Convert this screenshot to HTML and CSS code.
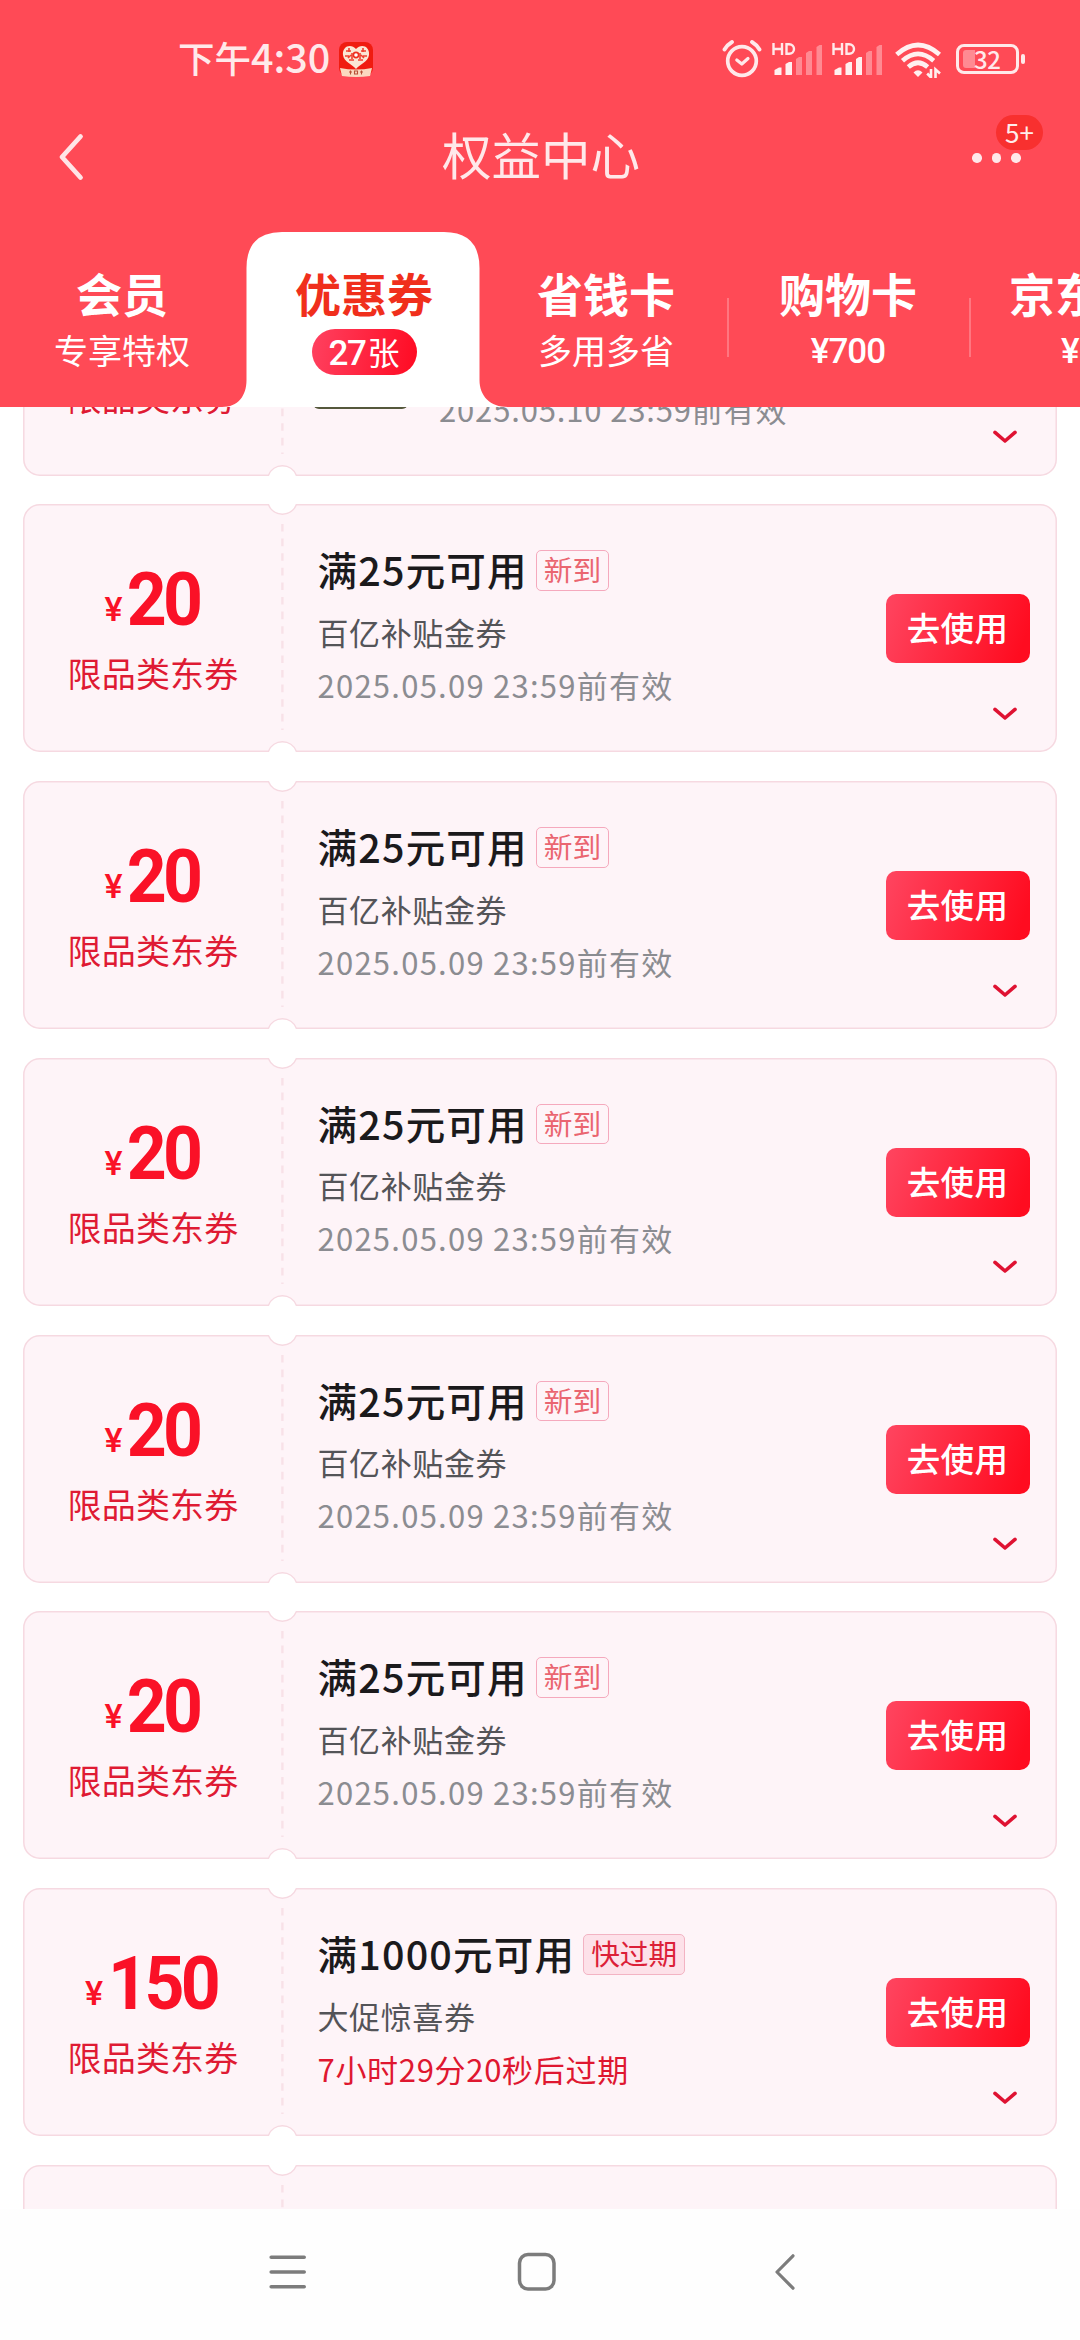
FILE: index.html
```html
<!DOCTYPE html>
<html lang="zh-CN">
<head>
<meta charset="utf-8">
<title>权益中心</title>
<link rel="stylesheet" href="styles.css">
</head>
<body>
<svg class="defs" width="0" height="0">
  <symbol id="ticket" viewBox="0 0 1034 248">
    <path d="M16.8 .8H245.5a15 15 0 0 0 27.8 0H1017.2a16 16 0 0 1 16 16V231.2a16 16 0 0 1 -16 16H273.3a15 15 0 0 0 -27.8 0H16.8a16 16 0 0 1 -16 -16V16.8a16 16 0 0 1 16 -16Z" fill="#fef4f8" stroke="#f6d9e1" stroke-width="1.5"/>
    <path d="M259.4 20V226" stroke="#f8e1e8" stroke-width="2.4" stroke-dasharray="7.6 7" fill="none"/>
  </symbol>
  <symbol id="chev" viewBox="0 0 24 14">
    <path d="M2 2.4L12 11L22 2.4" fill="none" stroke="#df1232" stroke-width="3.6" stroke-linecap="round" stroke-linejoin="round"/>
  </symbol>
  <symbol id="signal-hd" viewBox="0 0 24 12">
    <path d="M1.5 0V12M10 0V12M1.5 6H10M14.5 1.2H17.2a4.8 4.8 0 0 1 0 9.6H14.5Z" fill="none" stroke="#ffe9ea" stroke-width="2.4"/>
  </symbol>
</svg>
<div class="screen">
  <header class="header">
    <div class="status">
      <div class="clock">下午<span class="digits">4:30</span></div>
      <svg class="app" width="34" height="35" viewBox="0 0 34 35">
        <rect x="0" y="0" width="34" height="34" rx="8" fill="#f01c10"/>
        <path d="M17 7C12 1 3 4 4 13C5 20 13 22 17 27C21 22 29 20 30 13C31 4 22 1 17 7Z" fill="#fbe6d4"/>
        <path d="M7 9h5M6 14h4M10 6v4M13 11v6M21 11v6M24 6v4M22 9h5M24 14h4M10 18h5M19 18h5M12 13l-3 3M22 13l3 3" stroke="#ef4030" stroke-width="1.6" fill="none"/>
        <circle cx="17" cy="13" r="2.6" fill="#fff" stroke="#ef3020" stroke-width="1.6"/>
        <path d="M1 26Q17 29 33 26L31 34Q17 36 3 34Z" fill="#fbd9c0"/>
        <path d="M10 30h3M11.500 28.500v4M15.500 29h3v3h-3zM21 30h3M22.500 28.500v4" stroke="#b85038" stroke-width="1.1" fill="none"/>
      </svg>
      <div class="status-icons">
        <svg class="alarm" width="40" height="40" viewBox="0 0 40 40" fill="none" stroke="#ffe9ea" stroke-linecap="round" stroke-linejoin="round">
          <circle cx="20" cy="23" r="14.300" stroke-width="3.700"/>
          <path d="M2.500 11.500Q5 7 10 4M37.500 11.500Q35 7 30 4" stroke-width="3.800"/>
          <path d="M14.800 22L19.800 26L26 20.500" stroke-width="3.200"/>
        </svg>
        <svg class="signal" width="50" height="34" viewBox="0 0 50 34">
          <use href="#signal-hd" x="0" y="1" width="24" height="12"/>
          <g fill="#fff0f0"><path d="M2.500 33V28L7 25.500H9.500V33ZM13.500 33V22L17 20H20V33Z"/></g>
          <g fill="#ff8a92"><path d="M24 33V17L27 15H30V33ZM34 33V11L37 9H40V33ZM44.500 33V5L47.500 3H50V33Z"/></g>
        </svg>
        <svg class="signal" width="50" height="34" viewBox="0 0 50 34">
          <use href="#signal-hd" x="0" y="1" width="24" height="12"/>
          <g fill="#fff0f0"><path d="M2.500 33V28L7 25.500H9.500V33ZM13.500 33V22L17 20H20V33ZM24 33V17L27 15H30V33Z"/></g>
          <g fill="#ff8a92"><path d="M34 33V11L37 9H40V33ZM44.500 33V5L47.500 3H50V33Z"/></g>
        </svg>
        <svg class="wifi" width="47" height="36" viewBox="0 0 47 36" fill="none" stroke="#fff0f0" stroke-width="4.600">
          <path d="M1.700 12.500Q23 -6.500 44.500 12.500M7.500 18.800Q23 5 38.700 18.800M13.300 25Q23 16.500 32.700 25"/>
          <path d="M23 35L18.500 30.500Q23 26 27.500 30.500Z" fill="#fff0f0" stroke="none"/>
          <path d="M36 27V35.500L32.200 31.500M40.500 36V27.500L45 31.500" stroke-width="2.600"/>
        </svg>
        <div class="battery"><div class="battery-body"><i class="battery-fill"></i><span>32</span></div><i class="battery-tip"></i></div>
      </div>
    </div>
    <div class="titlebar">
      <svg class="back" width="26" height="50" viewBox="0 0 26 50"><path d="M22.500 4.500L4 25L22.500 45.500" fill="none" stroke="#ffe4e6" stroke-width="4.800" stroke-linecap="round" stroke-linejoin="round"/></svg>
      <h1 class="title">权益中心</h1>
      <div class="more"><i></i><i></i><i></i><b class="badge">5+</b></div>
    </div>
    <nav class="tabs">
      <div class="tab"><strong>会员</strong><span>专享特权</span></div>
      <div class="tab active">
        <svg class="tab-shape" width="286" height="175" viewBox="0 0 286 175"><path d="M0 175C16 175 24.500 164 24.500 148V36Q24.500 0 60 0H222Q257.500 0 257.500 36V148C257.500 164 268 175 286 175Z" fill="#fff"/></svg>
        <strong>优惠券</strong><span class="pill"><em>27</em>张</span>
      </div>
      <div class="tab"><strong>省钱卡</strong><span>多用多省</span></div>
      <div class="tab ruled"><strong>购物卡</strong><span class="money">¥700</span></div>
      <div class="tab ruled cut"><strong>京东</strong><span class="money">¥</span></div>
    </nav>
  </header>

  <main class="list">
    <article class="coupon">
      <svg class="paper"><use href="#ticket"/></svg>
      <div class="value"><div class="scope">限品类东券</div></div>
      <div class="with-thumb"><div class="thumb"></div><p class="date">2025.05.10 23:59前有效</p></div>
      <div class="action"><svg class="chev"><use href="#chev"/></svg></div>
    </article>
    <article class="coupon">
      <svg class="paper"><use href="#ticket"/></svg>
      <div class="value"><div class="price"><i>¥</i><b>20</b></div><div class="scope">限品类东券</div></div>
      <div class="info"><div class="head"><h2>满25元可用</h2><span class="tag">新到</span></div><p class="name">百亿补贴金券</p><p class="date">2025.05.09 23:59前有效</p></div>
      <div class="action"><button class="use">去使用</button><svg class="chev"><use href="#chev"/></svg></div>
    </article>
    <article class="coupon">
      <svg class="paper"><use href="#ticket"/></svg>
      <div class="value"><div class="price"><i>¥</i><b>20</b></div><div class="scope">限品类东券</div></div>
      <div class="info"><div class="head"><h2>满25元可用</h2><span class="tag">新到</span></div><p class="name">百亿补贴金券</p><p class="date">2025.05.09 23:59前有效</p></div>
      <div class="action"><button class="use">去使用</button><svg class="chev"><use href="#chev"/></svg></div>
    </article>
    <article class="coupon">
      <svg class="paper"><use href="#ticket"/></svg>
      <div class="value"><div class="price"><i>¥</i><b>20</b></div><div class="scope">限品类东券</div></div>
      <div class="info"><div class="head"><h2>满25元可用</h2><span class="tag">新到</span></div><p class="name">百亿补贴金券</p><p class="date">2025.05.09 23:59前有效</p></div>
      <div class="action"><button class="use">去使用</button><svg class="chev"><use href="#chev"/></svg></div>
    </article>
    <article class="coupon">
      <svg class="paper"><use href="#ticket"/></svg>
      <div class="value"><div class="price"><i>¥</i><b>20</b></div><div class="scope">限品类东券</div></div>
      <div class="info"><div class="head"><h2>满25元可用</h2><span class="tag">新到</span></div><p class="name">百亿补贴金券</p><p class="date">2025.05.09 23:59前有效</p></div>
      <div class="action"><button class="use">去使用</button><svg class="chev"><use href="#chev"/></svg></div>
    </article>
    <article class="coupon">
      <svg class="paper"><use href="#ticket"/></svg>
      <div class="value"><div class="price"><i>¥</i><b>20</b></div><div class="scope">限品类东券</div></div>
      <div class="info"><div class="head"><h2>满25元可用</h2><span class="tag">新到</span></div><p class="name">百亿补贴金券</p><p class="date">2025.05.09 23:59前有效</p></div>
      <div class="action"><button class="use">去使用</button><svg class="chev"><use href="#chev"/></svg></div>
    </article>
    <article class="coupon">
      <svg class="paper"><use href="#ticket"/></svg>
      <div class="value"><div class="price"><i>¥</i><b>150</b></div><div class="scope">限品类东券</div></div>
      <div class="info"><div class="head"><h2>满1000元可用</h2><span class="tag urgent">快过期</span></div><p class="name">大促惊喜券</p><p class="date countdown">7小时29分20秒后过期</p></div>
      <div class="action"><button class="use">去使用</button><svg class="chev"><use href="#chev"/></svg></div>
    </article>
    <article class="coupon"><svg class="paper"><use href="#ticket"/></svg></article>
  </main>

  <footer class="sysnav">
    <svg width="38" height="40" viewBox="0 0 38 40"><path d="M3.200 5.200H36.200M3.200 20H36.200M3.200 34.800H36.200" stroke="#7c7c7c" stroke-width="3.600" stroke-linecap="round"/></svg>
    <svg class="home" width="40" height="40" viewBox="0 0 40 40"><rect x="2.500" y="2.500" width="34.500" height="34.500" rx="8.500" fill="none" stroke="#7c7c7c" stroke-width="3.500"/></svg>
    <svg width="22" height="40" viewBox="0 0 22 40"><path d="M19 3.800L3 20L19 36.200" fill="none" stroke="#7c7c7c" stroke-width="3.200" stroke-linecap="round" stroke-linejoin="round"/></svg>
  </footer>
</div>
</body>
</html>
```
FILE: styles.css
```css
* { box-sizing: border-box; margin: 0; padding: 0; }
body { width: 1080px; height: 2340px; overflow: hidden; background: #fff; font-family: "Noto Sans CJK SC", sans-serif; }
i, em { font-style: normal; }
svg { display: block; flex: none; }
.defs { position: absolute; }
.screen { width: 1080px; height: 2340px; display: flex; flex-direction: column; overflow: hidden; }

/* header */
.header { height: 407px; flex: none; background: #ff4a56; color: #fff; display: flex; flex-direction: column; overflow: hidden; }
.status { height: 112px; padding: 38px 55px 0 178px; display: flex; align-items: flex-start; color: #ffe9ea; }
.clock { width: 161px; height: 40px; margin-top: -2px; line-height: 40px; font-size: 36.5px; font-weight: 500; white-space: nowrap; }
.clock .digits { font-size: 39.500px; line-height: 40px; }
.app { margin-top: 4px; }
.status-icons { margin-left: auto; display: flex; align-items: flex-start; }
.signal { margin: 4px 0 0 10px; }
.wifi { margin: 4px 0 0 13px; }
.battery { margin: 6px 0 0 14px; display: flex; align-items: center; gap: 2px; }
.battery-body { width: 63px; height: 30px; border: 3px solid #ffe9ea; border-radius: 8px; padding: 3px 4px; display: flex; align-items: center; }
.battery-fill { width: 12px; height: 18px; border-radius: 3px 0 0 3px; background: #ff8a92; }
.battery-body span { font: 500 24px/20px "Noto Sans CJK SC", sans-serif; letter-spacing: -.5px; margin-left: -1px; }
.battery-tip { width: 4px; height: 10px; border-radius: 2px; background: #ffe9ea; }

.titlebar { height: 120px; flex: none; padding: 0 37px 0 58px; display: grid; grid-template-columns: 120px 1fr 71px; align-items: start; }
.back { margin-top: 20px; }
.title { margin: 9px 0 0 83px; padding-left: 181px; font-size: 49.500px; line-height: 66px; font-weight: 400; color: #ffe8ea; white-space: nowrap; }
.more { position: relative; margin-top: 41px; display: flex; gap: 10px; }
.more > i { width: 9.500px; height: 9.500px; border-radius: 50%; background: #ffe8ea; }
.badge { position: absolute; left: 24px; top: -38px; width: 47px; height: 35px; border-radius: 18px; background: #f8302f; font-size: 26px; line-height: 33px; font-weight: 400; text-align: center; color: #ffeceb; }

.tabs { height: 175px; display: flex; padding-left: 1px; width: 1220px; }
.tab { position: relative; width: 242px; flex: none; display: flex; flex-direction: column; align-items: center; padding-top: 32px; white-space: nowrap; }
.tab strong { position: relative; font-size: 46px; line-height: 56px; font-weight: 700; }
.tab > span { position: relative; margin-top: 7px; font-size: 34px; line-height: 46px; height: 46px; }
.tab-shape { position: absolute; left: -21px; top: 0; }
.active { z-index: 1; }
.active strong { color: #f02f1c; }
.tab .pill { margin-top: 9px; width: 105px; border-radius: 23px; background: linear-gradient(100deg, #ff4160, #ff0a22); text-align: center; line-height: 44px; font-size: 32px; }
.pill em { font-family: Roboto, sans-serif; font-size: 35px; font-weight: 500; letter-spacing: -1.500px; margin-right: 2px; }
.tab .money { font-family: Roboto, sans-serif; font-weight: 500; font-size: 35px; letter-spacing: -1px; margin-top: 9px; }
.ruled { background: linear-gradient(#ff7680, #ff7680) 0 66px / 2.500px 59px no-repeat; background-position-x: -1px; }
.tab.ruled { background-size: 3px 59px; }
.cut { align-items: flex-start; padding-left: 40px; }
.cut .money { margin-left: 52px; }

/* coupons */
.list { height: 1802px; flex: none; overflow: hidden; padding: 0 23px; display: flex; flex-direction: column; gap: 28.750px; }
.coupon { position: relative; height: 248px; flex: none; display: grid; grid-template-columns: 260px 1fr 173px; }
.coupon:first-child { margin-top: -179.500px; }
.coupon > * { position: relative; }
.coupon > .paper { position: absolute; left: 0; top: 0; width: 1034px; height: 248px; }
.value { padding-top: 65px; display: flex; flex-direction: column; align-items: center; }
.price { height: 60px; display: flex; align-items: baseline; color: #fa1127; font-family: Roboto, sans-serif; line-height: 60px; }
.price i { font-size: 34px; line-height: 34px; font-weight: 500; position: relative; top: -4px; margin-right: 1px; }
.price b { font-size: 75px; font-weight: 700; letter-spacing: -4px; line-height: 60px; transform: scaleX(.93); }
.scope { margin-top: 24px; font-size: 34px; line-height: 40px; letter-spacing: .2px; color: #df1a33; }
.coupon:first-child .value { padding-top: 125px; }
.info { padding: 46px 0 0 34.500px; white-space: nowrap; }
.head { height: 40.500px; display: flex; gap: 8px; }
.head h2 { font-size: 39.500px; line-height: 38px; font-weight: 500; letter-spacing: 1.200px; color: #1b1a1c; }
.tag { height: 40.500px; border: 1.500px solid #f5a9bd; border-radius: 5px; padding: 0 7px; font-size: 28.700px; line-height: 36px; color: #ea6570; }
.urgent { background: #fde1e9; border-color: #f3b3c3; color: #dc1f38; }
.name { margin-top: 23px; font-size: 31px; line-height: 36px; letter-spacing: .6px; color: #545458; }
.date { margin-top: 17px; font-size: 31px; line-height: 36px; letter-spacing: 1.250px; color: #8b8c91; white-space: nowrap; }
.countdown { letter-spacing: .7px; color: #df1730; }
.with-thumb { padding: 86px 0 0 30px; display: grid; grid-template-columns: 95px 1fr; column-gap: 31px; }
.with-thumb .date { margin-top: 77px; letter-spacing: .85px; }
.thumb { height: 95px; background: #55583c; border-radius: 0 0 6px 6px; }
.action { padding-top: 90px; display: flex; flex-direction: column; }
.coupon:first-child .action { padding-top: 202px; }
.use { width: 144px; height: 69px; flex: none; margin-left: 1.500px; border: 0; border-radius: 10px; background: linear-gradient(110deg, #ff4560, #ff0c20 92%); color: #fff; font: 500 33.500px/66px "Noto Sans CJK SC", sans-serif; letter-spacing: .3px; text-align: center; padding-bottom: 3px; }
.chev { width: 24px; height: 14px; margin: 43.500px 0 0 108.500px; }
.coupon:first-child .chev { margin-top: 0; }

/* system navigation */
.sysnav { height: 131px; flex: none; background: #fefefe; padding: 43px 284px 0 268px; display: flex; justify-content: space-between; }
.home { margin-left: -6px; }
```
